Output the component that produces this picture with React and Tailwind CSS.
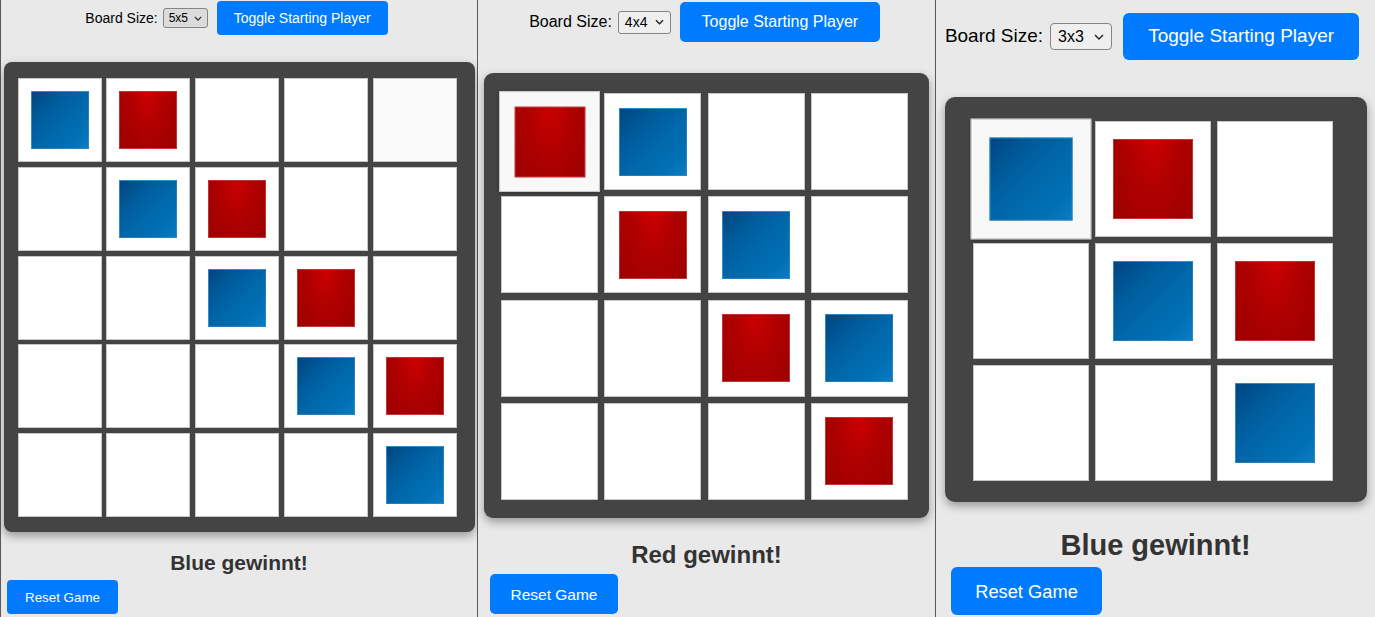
import React from "react";

const RED = "R";

function Piece({ color, size }) {
  if (color === RED) {
    return (
      <div
        className={`${size} border border-[#d86a6a]/50 bg-[radial-gradient(ellipse_at_50%_0%,#cc0000_0%,#b00000_45%,#9c0000_100%)]`}
      />
    );
  }
  return (
    <div
      className={`${size} border border-[#5aa9e0]/50 bg-[linear-gradient(135deg,#00457f_0%,#005c9c_30%,#0068ab_55%,#0070b5_80%,#0a7cc2_100%)]`}
    />
  );
}

function Chevron({ cls }) {
  return (
    <svg viewBox="0 0 10 6" className={cls} fill="none" stroke="#222" strokeWidth="1.4">
      <path d="M1 1l4 4 4-4" />
    </svg>
  );
}

function Panel({ c, board, sizeLabel }) {
  return (
    <div className={`${c.wrap} flex flex-col h-full bg-[#e9e9e9] [font-family:'Liberation_Sans',Arial,sans-serif]`}>
      <div className={`${c.header} flex items-center justify-center`}>
        <span className={`${c.label} text-black`}>Board Size:</span>
        <div
          className={`${c.select} flex items-center justify-between border border-[#858585] text-black`}
        >
          <span>{sizeLabel}</span>
          <Chevron cls={c.chev} />
        </div>
        <button className={`${c.toggle} bg-[#007bff] text-white flex items-center justify-center`}>
          Toggle Starting Player
        </button>
      </div>
      <div className="flex justify-center">
        <div className={`${c.board} bg-[#444444] shadow-[0_4px_10px_rgba(0,0,0,0.35)]`}>
          <div className={c.grid}>
            {board.flat().map((v, i) => {
              const hl = c.hl === i;
              return (
                <div
                  key={i}
                  className={`border border-[#c6c6c6] flex items-center justify-center ${
                    hl ? c.hlCls : "bg-white"
                  }`}
                >
                  {v !== "_" && <Piece color={v} size={c.piece} />}
                </div>
              );
            })}
          </div>
        </div>
      </div>
      <div className={`${c.heading} text-center font-bold text-[#333333]`}>{c.winner}</div>
      <div className="flex">
        <button className={`${c.reset} bg-[#007bff] text-white flex items-center justify-center`}>
          Reset Game
        </button>
      </div>
    </div>
  );
}

const b5 = [
  ["B", "R", "_", "_", "_"],
  ["_", "B", "R", "_", "_"],
  ["_", "_", "B", "R", "_"],
  ["_", "_", "_", "B", "R"],
  ["_", "_", "_", "_", "B"],
];
const b4 = [
  ["R", "B", "_", "_"],
  ["_", "R", "B", "_"],
  ["_", "_", "R", "B"],
  ["_", "_", "_", "R"],
];
const b3 = [
  ["B", "R", "_"],
  ["_", "B", "R"],
  ["_", "_", "B"],
];

const c1 = {
  wrap: "w-[478px] shrink-0 border-x border-[#5a5a5a]",
  header: "mt-[1px]",
  label: "text-[14px] mr-[5px]",
  select: "h-[20px] w-[45px] mr-[9px] text-[12px] bg-[#dcdcdc] rounded-[3px] pl-[5px] pr-[5px]",
  chev: "w-[8px] h-[5px]",
  toggle: "h-[34px] w-[171px] text-[14px] rounded-[4px] mr-[5px]",
  board: "mt-[27px] w-[471px] h-[470px] pt-[16px] pl-[14px] rounded-[8px]",
  grid: "grid grid-cols-[repeat(5,84px)] grid-rows-[repeat(5,84px)] gap-[4.75px]",
  piece: "w-[58px] h-[58px]",
  hl: 4,
  hlCls: "bg-[#fafafa]",
  heading: "mt-[19px] text-[21px] leading-[24px]",
  reset: "mt-[5px] ml-[6px] h-[34px] w-[111px] text-[13.33px] rounded-[4px] pt-[2px]",
  winner: "Blue gewinnt!",
};

const c2 = {
  wrap: "w-[458px] shrink-0 border-r border-[#5a5a5a]",
  header: "mt-[2px]",
  label: "text-[16px] mr-[6px]",
  select: "h-[23px] w-[53px] mr-[9px] text-[14px] bg-[#efefef] rounded-[3px] pl-[6px] pr-[6px]",
  chev: "w-[9px] h-[6px]",
  toggle: "h-[40px] w-[200px] text-[16px] rounded-[5px] mr-[4px]",
  board: "mt-[31px] w-[445px] h-[445px] pt-[20px] pl-[17px] rounded-[9px]",
  grid: "grid grid-cols-[repeat(4,97px)] grid-rows-[repeat(4,97px)] gap-[6.3px]",
  piece: "w-[68px] h-[68px]",
  hl: 0,
  hlCls: "bg-[#f8f8f8] scale-[1.04] shadow-[0_2px_4px_rgba(0,0,0,0.25)]",
  heading: "mt-[23px] text-[24px] leading-[28px]",
  reset: "mt-[5px] ml-[12px] h-[40px] w-[128px] text-[15.5px] rounded-[5px] pt-[2px]",
  winner: "Red gewinnt!",
};

const c3 = {
  wrap: "flex-1",
  header: "mt-[13px]",
  label: "text-[19px] mr-[7px]",
  select: "h-[27px] w-[62px] mr-[11px] text-[16px] bg-[#efefef] rounded-[4px] pl-[7px] pr-[7px]",
  chev: "w-[10px] h-[6px]",
  toggle: "h-[47px] w-[236px] text-[19px] rounded-[6px] mr-[7px]",
  board: "mt-[37px] w-[422px] h-[405px] pt-[24px] pl-[28px] rounded-[10px]",
  grid: "grid grid-cols-[repeat(3,116px)] grid-rows-[repeat(3,116px)] gap-[6px]",
  piece: "w-[80px] h-[80px]",
  hl: 0,
  hlCls: "bg-[#f8f8f8] scale-[1.04] shadow-[0_2px_4px_rgba(0,0,0,0.25)]",
  heading: "mt-[26px] text-[29px] leading-[34px]",
  reset: "mt-[5px] ml-[15px] h-[48px] w-[151px] text-[18.3px] rounded-[6px] pt-[2px]",
  winner: "Blue gewinnt!",
};

export default function App() {
  return (
    <div className="flex w-[1375px] h-[617px] overflow-hidden bg-[#e9e9e9]">
      <Panel c={c1} board={b5} sizeLabel="5x5" />
      <Panel c={c2} board={b4} sizeLabel="4x4" />
      <Panel c={c3} board={b3} sizeLabel="3x3" />
    </div>
  );
}
